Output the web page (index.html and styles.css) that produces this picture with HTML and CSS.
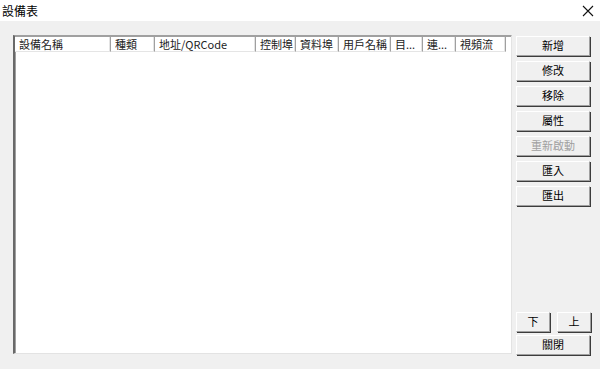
FILE: index.html
```html
<!DOCTYPE html>
<html lang="zh-Hant">

<head>
  <meta charset="UTF-8">
  <title>設備表</title>
  <link rel="stylesheet" href="styles.css">
</head>

<body>

  <div class="titlebar">
    <span class="title">設備表</span>
    <svg class="close" width="12" height="12" viewBox="0 0 12 12">
      <path d="M1 1 L11 11 M11 1 L1 11" stroke="#111" stroke-width="1.1" fill="none"/>
    </svg>
  </div>

  <div class="dialog">
    <div class="listview">
      <div class="header">
        <div class="col c1">設備名稱</div>
        <div class="col c2">種類</div>
        <div class="col c3">地址/QRCode</div>
        <div class="col c4">控制埠</div>
        <div class="col c5">資料埠</div>
        <div class="col c6">用戶名稱</div>
        <div class="col c7">目...</div>
        <div class="col c8">連...</div>
        <div class="col c9">視頻流</div>
      </div>
    </div>

    <div class="side">
      <div class="button-group">
        <button type="button">新增</button>
        <button type="button">修改</button>
        <button type="button">移除</button>
        <button type="button">屬性</button>
        <button type="button" disabled>重新啟動</button>
        <button type="button">匯入</button>
        <button type="button">匯出</button>
      </div>

      <div class="bottom-group">
        <div class="updown">
          <button type="button">下</button>
          <button type="button">上</button>
        </div>
        <button type="button">關閉</button>
      </div>
    </div>
  </div>

</body>

</html>
```

FILE: styles.css
```css
* {
  box-sizing: border-box;
}

body {
  margin: 0;
  padding: 0;
  width: 600px;
  height: 369px;
  overflow: hidden;
  background: #f0f0f0;
  font-family: "Noto Sans CJK TC", "Liberation Sans", sans-serif;
  font-size: 11px;
  color: #000;
}

.titlebar {
  height: 21px;
  background: #fff;
  display: flex;
  align-items: center;
  justify-content: space-between;
  padding: 0 6px 0 2px;
}

.title {
  font-size: 12px;
}

.dialog {
  display: flex;
  padding: 14px 0 0 13px;
  gap: 4px;
}

.listview {
  width: 499px;
  height: 319px;
  background: #fff;
  border-top: 1px solid #a0a0a0;
  border-left: 2px solid #696969;
  border-right: 1px solid #e3e3e3;
  border-bottom: 1px solid #e3e3e3;
  box-shadow: inset 1px 1px 0 #a0a0a0;
  padding: 1px 0 0 0;
}

.header {
  display: flex;
  height: 15px;
}

.col {
  height: 15px;
  line-height: 14px;
  padding-left: 4px;
  background: #fff;
  color: #222;
  border-right: 1px solid #a0a0a0;
  border-bottom: 1px solid #e5e5e5;
  box-shadow: inset -1px 0 0 #e3e3e3;
  white-space: nowrap;
  overflow: hidden;
}

.c1 { width: 96px; }
.c2 { width: 44px; }
.c3 { width: 101px; }
.c4 { width: 40px; }
.c5 { width: 43px; }
.c6 { width: 52px; }
.c7 { width: 32px; }
.c8 { width: 33px; }
.c9 { width: 50px; }

.side {
  width: 75px;
  height: 320px;
  padding-top: 1px;
  display: flex;
  flex-direction: column;
  justify-content: space-between;
}

.button-group,
.bottom-group {
  display: flex;
  flex-direction: column;
  gap: 5px;
}

.bottom-group {
  gap: 3px;
}

.updown {
  display: flex;
  justify-content: space-between;
}

.updown button {
  width: 34px;
}

button {
  height: 20px;
  width: 74px;
  padding: 0 0 2px 0;
  font-family: inherit;
  font-size: 11px;
  color: #000;
  background: #f0f0f0;
  border-top: 1px solid #fff;
  border-left: 1px solid #fff;
  border-right: 1px solid #a0a0a0;
  border-bottom: 1px solid #a0a0a0;
  box-shadow: 1px 1px 0 #3c3c3c;
}

button:disabled {
  color: #a0a0a0;
}
```
